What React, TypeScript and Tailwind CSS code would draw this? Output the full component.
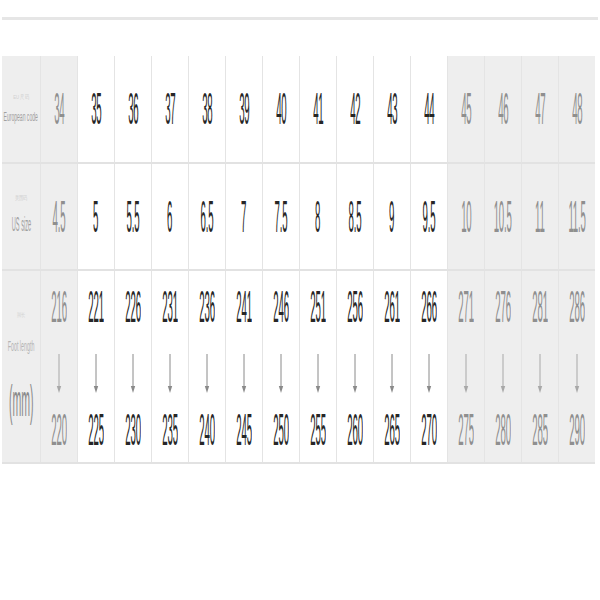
import React from 'react';

const EU = ['34', '35', '36', '37', '38', '39', '40', '41', '42', '43', '44', '45', '46', '47', '48'];
const US = ['4.5', '5', '5.5', '6', '6.5', '7', '7.5', '8', '8.5', '9', '9.5', '10', '10.5', '11', '11.5'];
const FROM = ['216', '221', '226', '231', '236', '241', '246', '251', '256', '261', '266', '271', '276', '281', '286'];
const TO = ['220', '225', '230', '235', '240', '245', '250', '255', '260', '265', '270', '275', '280', '285', '290'];

// columns 0 and 11-14 are greyed out
const isGrey = (i: number) => i === 0 || i >= 11;

function Num({ value, grey }: { value: string; grey: boolean }) {
  return (
    <span
      className={`inline-block scale-x-[0.22] text-[44px] leading-none tracking-tight ${grey ? 'text-[#8f8f8f]' : 'text-[#262626]'}`}
      style={{ fontFamily: '"Liberation Sans", Arial, sans-serif' }}
    >
      {value}
    </span>
  );
}

function Arrow({ grey }: { grey: boolean }) {
  const c = grey ? '#a8a8a8' : '#8a8a8a';
  return (
    <svg width="8" height="40" viewBox="0 0 8 40" className="block">
      <line x1="4" y1="0" x2="4" y2="36" stroke={c} strokeWidth="1" />
      <path d="M1.8 32 L4 39 L6.2 32 Z" fill={c} />
    </svg>
  );
}

function cellCls(i: number) {
  return `flex items-center justify-center border-l border-[#e4e4e4] ${isGrey(i) ? 'bg-[#eeeeee]' : 'bg-white'}`;
}

export default function App() {
  return (
    <div className="w-[600px] h-[600px] bg-white overflow-hidden" style={{ fontFamily: '"Liberation Sans", Arial, sans-serif' }}>
      <div className="pt-[17px] px-[2px]">
        <div className="h-[3px] bg-[#e6e6e6]" />
      </div>

      <div className="mt-[36px] ml-[2px] w-[593px] grid grid-cols-[38px_repeat(15,37px)] grid-rows-[108px_107px_191px] border-b-2 border-[#e2e2e2]">
        {/* row 1 */}
        <div className="flex flex-col items-center justify-center gap-[6px] bg-[#eeeeee] border-b-2 border-[#e2e2e2]">
          <span className="text-[6px] text-[#d0d0d0] scale-x-[0.7]">EU 尺码</span>
          <span className="inline-block text-[12px] text-[#a0a0a0] scale-x-[0.42] whitespace-nowrap">European code</span>
        </div>
        {EU.map((v, i) => (
          <div key={'eu' + v} className={`${cellCls(i)} border-b-2 border-b-[#e2e2e2]`}>
            <Num value={v} grey={isGrey(i)} />
          </div>
        ))}

        {/* row 2 */}
        <div className="flex flex-col items-center justify-center gap-[6px] bg-[#eeeeee] border-b-2 border-[#e2e2e2]">
          <span className="text-[6px] text-[#d0d0d0] scale-x-[0.7]">美国码</span>
          <span className="inline-block text-[20px] text-[#a0a0a0] scale-x-[0.28] whitespace-nowrap">US size</span>
        </div>
        {US.map((v, i) => (
          <div key={'us' + v} className={`${cellCls(i)} border-b-2 border-b-[#e2e2e2]`}>
            <Num value={v} grey={isGrey(i)} />
          </div>
        ))}

        {/* row 3 */}
        <div className="flex flex-col items-center justify-center bg-[#eeeeee]">
          <span className="text-[6px] text-[#d6d6d6] scale-x-[0.7] mb-[16px]">脚长</span>
          <span className="inline-block text-[14px] text-[#b4b4b4] scale-x-[0.38] whitespace-nowrap">Foot length</span>
          <span className="inline-block mt-[22px] text-[44px] leading-none text-[#8a8a8a] scale-x-[0.24]">(mm)</span>
        </div>
        {FROM.map((v, i) => (
          <div key={'ft' + v} className={`${cellCls(i)} flex-col justify-start pt-[14px]`}>
            <Num value={v} grey={isGrey(i)} />
            <div className="mt-[25px]">
              <Arrow grey={isGrey(i)} />
            </div>
            <div className="mt-[14px]">
              <Num value={TO[i]} grey={isGrey(i)} />
            </div>
          </div>
        ))}
      </div>
    </div>
  );
}
